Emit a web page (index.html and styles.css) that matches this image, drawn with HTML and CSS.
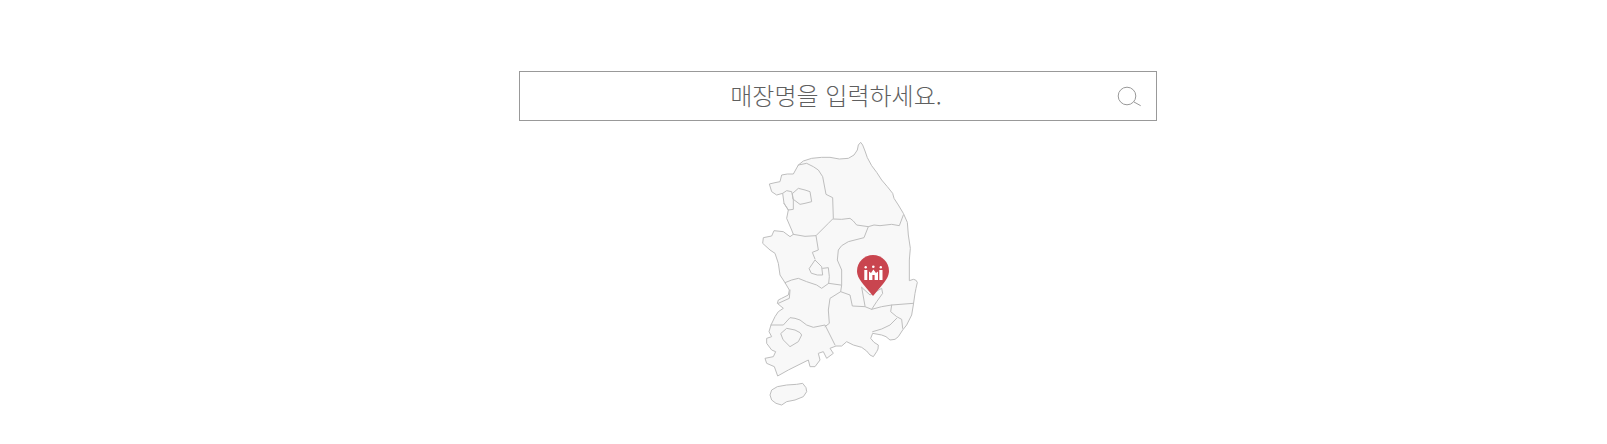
FILE: index.html
```html
<!DOCTYPE html>
<html lang="ko">
<head>
<meta charset="utf-8">
<title>매장 찾기</title>
<link rel="stylesheet" href="styles.css">
</head>
<body>
<main class="page">
  <form class="search">
    <span class="search-text">매장명을 입력하세요.</span>
    <svg class="search-icon" width="32" height="26" viewBox="0 0 32 26">
      <circle cx="13" cy="11" r="8.8"/>
      <path d="M20 17 26.7 20.7"/>
    </svg>
  </form>
  <div class="map">
    <svg class="map-svg" width="180" height="275" viewBox="0 0 540 825">
      <path class="land" d="M332 22 338 30 345 48 352 68 365 92 380 112 395 135 412 155 428 175 432 190 445 210 460 235 472 262 475 300 481 340 478 375 478 405 478 437 490 433 497 435 502 442 498 460 495 475 490 510 485 540 470 570 458 585 445 605 435 613 420 615 408 605 395 600 368 595 362 610 372 622 385 630 384 642 380 650 370 665 360 660 350 648 335 637 310 630 290 620 275 633 258 633 240 640 250 655 230 670 220 650 205 655 210 675 195 695 180 695 175 675 135 695 115 705 83 723 73 695 50 685 45 670 70 665 77 650 65 645 50 625 50 610 65 605 57 590 63 570 75 545 85 530 100 520 82 505 85 495 95 490 115 480 118 465 105 443 90 420 85 385 75 355 60 345 38 325 40 308 65 303 72 287 100 290 120 305 130 298 125 285 110 250 115 225 102 205 98 175 80 180 65 170 58 147 75 143 90 140 95 120 112 117 130 117 145 90 160 78 185 70 215 67 240 67 268 72 295 70 312 60 322 45 325 30Z"/>
      <path class="land" d="M65 765 82 755 110 750 140 748 158 745 168 758 170 770 160 785 135 795 110 800 95 810 78 805 65 795 60 780Z"/>
      <path class="line" d="M145 90 170 85 190 95 205 105 218 125 228 178 248 188 250 250 235 265 198 302 165 304 130 298"/>
      <path class="line" d="M250 252 275 253 300 250 310 258 320 270 355 275 372 270 390 272 425 268 448 272 460 240"/>
      <path class="line" d="M355 275 342 308 295 320 275 332 265 345 262 375 275 405 275 450 272 470 240 490 235 525 238 565 225 575"/>
      <path class="line" d="M272 470 300 480 307 513 345 515 365 523 395 515 425 510 490 505"/>
      <path class="line" d="M198 302 205 345 187 352 195 372"/>
      <path class="line" d="M178 400 195 375 215 395 218 420 202 420 185 415Z"/>
      <path class="line" d="M218 400 235 398 238 425 236 445 272 450"/>
      <path class="line" d="M236 445 215 460 200 450 170 440 145 430 125 435 105 443"/>
      <path class="line" d="M120 465 118 490 85 505"/>
      <path class="line" d="M63 570 100 570 120 548 135 550 150 555 170 570 190 577 225 570 240 600 255 630"/>
      <path class="line" d="M93 595 110 580 135 585 150 593 155 600 145 620 120 635 100 615Z"/>
      <path class="line" d="M335 457 345 513"/>
      <path class="line" d="M335 457 360 480 395 460 398 475 380 500 365 523"/>
      <path class="line" d="M425 510 422 530 440 545 455 553 458 580"/>
      <path class="line" d="M440 550 420 570 395 582 368 590"/>
      <path class="line" d="M128 175 145 160 165 165 180 170 185 200 165 205 150 208 130 193Z"/>
      <path class="line" d="M98 175 110 167 125 170 130 195 130 223 115 225 102 205"/>
    </svg>
    <svg class="pin" width="32" height="41" viewBox="0 0 32 41">
      <path class="pin-body" d="M16 0C7.2 0 0 7.2 0 16 0 21 3 25 6 29L16 41 26 29C29 25 32 21 32 16 32 7.2 24.8 0 16 0Z"/>
      <circle class="pin-mark" cx="8.7" cy="12.3" r="1.2"/>
      <circle class="pin-mark" cx="16.3" cy="11.7" r="1.3"/>
      <circle class="pin-mark" cx="23.8" cy="12.3" r="1.2"/>
      <path class="pin-mark" d="M7.3 15H10.3V25H7.3ZM22.3 15H25.5V25H22.3ZM12 16.5 14 18 16.4 14.5 19 18 21 16.5V25H17.6V20H15.4V25H12Z"/>
    </svg>
  </div>
</main>
</body>
</html>
```
FILE: styles.css
```css
* {
  box-sizing: border-box;
}

html,
body {
  margin: 0;
  background: #fff;
}

.page {
  padding: 71px 0 0 519px;
  height: 444px;
  overflow: hidden;
}

.search {
  position: relative;
  display: flex;
  align-items: center;
  justify-content: center;
  width: 638px;
  height: 50px;
  margin: 0;
  padding: 0 4px 2px 0;
  border: 1px solid #999;
}

.search-text {
  font-family: "Noto Sans CJK KR", "Noto Sans", sans-serif;
  font-size: 24px;
  font-weight: 300;
  line-height: 30px;
  color: #5f5f5f;
}

.search-icon {
  position: absolute;
  top: 13px;
  right: 10px;
  fill: none;
  stroke: #999;
  stroke-width: 1;
}

.map {
  position: relative;
  width: 180px;
  height: 275px;
  margin: 14px 0 0 231px;
}

.map-svg {
  display: block;
}

.land {
  fill: #f8f8f8;
  stroke: #bebebe;
  stroke-width: 3;
  stroke-linejoin: round;
}

.line {
  fill: none;
  stroke: #bebebe;
  stroke-width: 3;
  stroke-linejoin: round;
  stroke-linecap: round;
}

.pin {
  position: absolute;
  left: 107px;
  top: 120px;
}

.pin-body {
  fill: #c9454f;
}

.pin-mark {
  fill: #fff;
}
```
